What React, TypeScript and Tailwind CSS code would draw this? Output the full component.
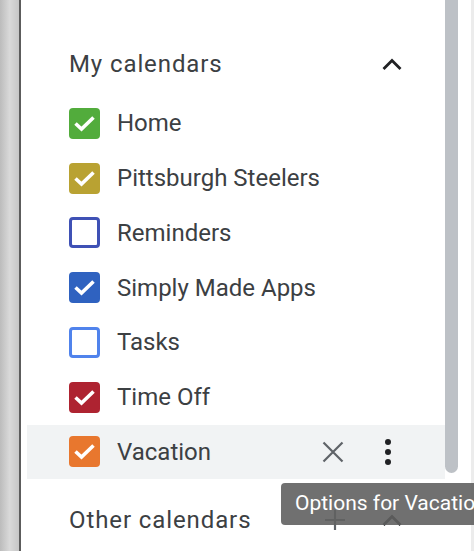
import React from 'react';

type Cal = { name: string; color: string; checked: boolean; active?: boolean };

const calendars: Cal[] = [
  { name: 'Home', color: '#52ac3c', checked: true },
  { name: 'Pittsburgh Steelers', color: '#b9a232', checked: true },
  { name: 'Reminders', color: '#3f51b5', checked: false },
  { name: 'Simply Made Apps', color: '#2f62c0', checked: true },
  { name: 'Tasks', color: '#5083ec', checked: false },
  { name: 'Time Off', color: '#ae2331', checked: true },
  { name: 'Vacation', color: '#e8772e', checked: true, active: true },
];

const ChevronUp = () => (
  <svg width="20" height="14" viewBox="0 0 20 14" fill="none">
    <path d="M1.5 12 L10 3.5 L18.5 12" stroke="#202124" strokeWidth="2.8" />
  </svg>
);

const Check = () => (
  <svg width="31" height="31" viewBox="0 0 31 31" fill="none">
    <path d="M6.5 15.5 L12.5 21 L24.5 9.5" stroke="#fff" strokeWidth="3.6" />
  </svg>
);

const Box = ({ color, checked }: { color: string; checked: boolean }) =>
  checked ? (
    <div className="w-[31px] h-[31px] rounded-[4px] shrink-0" style={{ backgroundColor: color }}>
      <Check />
    </div>
  ) : (
    <div className="w-[31px] h-[31px] rounded-[4px] border-[3px] bg-white shrink-0" style={{ borderColor: color }} />
  );

const CloseIcon = () => (
  <svg width="22" height="22" viewBox="0 0 22 22" fill="none">
    <path d="M1.5 1.5 L20.5 20.5 M20.5 1.5 L1.5 20.5" stroke="#5f6368" strokeWidth="2.2" />
  </svg>
);

const Dots = () => (
  <svg width="8" height="26" viewBox="0 0 8 26" fill="#202124">
    <circle cx="4" cy="3" r="3" />
    <circle cx="4" cy="13" r="3" />
    <circle cx="4" cy="23" r="3" />
  </svg>
);

const Plus = () => (
  <svg width="22" height="22" viewBox="0 0 22 22" fill="none">
    <path d="M11 1 V21 M1 11 H21" stroke="#5f6368" strokeWidth="2.2" />
  </svg>
);

export default function App() {
  return (
    <div className="relative w-[474px] h-[551px] overflow-hidden flex bg-white" style={{ fontFamily: 'Roboto, "Liberation Sans", sans-serif' }}>
      {/* left shade */}
      <div className="w-[19px] h-full bg-gradient-to-r from-[#bcbcbc] via-[#d9d9d9] to-[#c6c6c6]" />
      <div className="w-[2px] h-full bg-[#5c5c5c]" />

      {/* panel */}
      <div className="w-[424px] h-full bg-white text-[#3c4043]">
        <div className="mt-[36px] h-[56px] flex items-center pl-[48px] pr-[33px]">
          <span className="text-[24px] tracking-[0.9px]">My calendars</span>
          <div className="ml-auto w-[40px] h-[40px] flex items-center justify-center">
            <ChevronUp />
          </div>
        </div>

        <ul className="mt-[4px]">
          {calendars.map((c) => (
            <li
              key={c.name}
              className={`ml-[6px] h-[54.75px] flex items-center pl-[42px] pr-[37px] ${c.active ? 'bg-[#f1f3f4]' : ''}`}
            >
              <Box color={c.color} checked={c.checked} />
              <span className="ml-[17px] text-[24px] leading-none">{c.name}</span>
              {c.active && (
                <div className="ml-auto flex items-center gap-[15px]">
                  <div className="w-[40px] h-[40px] flex items-center justify-center">
                    <CloseIcon />
                  </div>
                  <div className="w-[40px] h-[40px] flex items-center justify-center">
                    <Dots />
                  </div>
                </div>
              )}
            </li>
          ))}
        </ul>

        <div className="mt-[13px] h-[56px] flex items-center pl-[48px] pr-[33px]">
          <span className="text-[24px] tracking-[0.9px]">Other calendars</span>
          <div className="ml-auto flex items-center gap-[17px]">
            <div className="w-[40px] h-[40px] flex items-center justify-center">
              <Plus />
            </div>
            <div className="w-[40px] h-[40px] flex items-center justify-center">
              <ChevronUp />
            </div>
          </div>
        </div>
      </div>

      {/* scrollbar */}
      <div className="w-[13px] h-full">
        <div className="h-[473px] bg-[#bdc1c6] rounded-b-[7px]" />
      </div>
      <div className="w-[13px] h-full bg-white" />
      <div className="w-[3px] h-full bg-[#ececec]" />

      {/* tooltip */}
      <div className="absolute left-[281px] top-[483px] h-[42px] pl-[14px] pr-[20px] flex items-center rounded-[4px] bg-[#616161]/90 text-white text-[21px] whitespace-nowrap">
        Options for Vacation
      </div>
    </div>
  );
}
